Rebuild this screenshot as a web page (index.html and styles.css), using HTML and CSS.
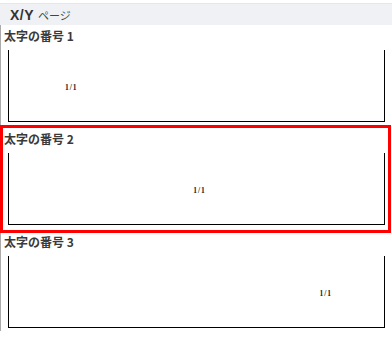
FILE: index.html
```html
<!DOCTYPE html>
<html lang="ja">
<head>
<meta charset="utf-8">
<link rel="stylesheet" href="styles.css">
</head>
<body>
<div class="header"><span class="xy">X/Y</span> <span class="page">ページ</span></div>
<div class="list">
  <div class="section">
    <div class="label">太字の番号 1</div>
    <div class="box left"><span class="num">1/1</span></div>
  </div>
  <div class="section selected">
    <div class="label">太字の番号 2</div>
    <div class="box center"><span class="num">1/1</span></div>
  </div>
  <div class="section">
    <div class="label">太字の番号 3</div>
    <div class="box right"><span class="num">1/1</span></div>
  </div>
</div>
</body>
</html>
```
FILE: styles.css
```css
html, body {
  margin: 0;
  padding: 0;
  background: #fff;
}
body {
  width: 392px;
  height: 337px;
  overflow: hidden;
  font-family: "Noto Sans CJK JP", "Noto Sans", sans-serif;
  color: #333;
}
.header {
  margin-top: 3px;
  height: 21px;
  border-top: 1px solid #e4e9e4;
  background: #f0f1f4;
  padding-left: 10px;
  display: flex;
  align-items: center;
  gap: 4px;
}
.xy {
  font-family: "Liberation Sans", "Noto Sans", sans-serif;
  font-weight: bold;
  font-size: 14px;
  letter-spacing: 0.5px;
  color: #333;
}
.page {
  font-size: 11px;
  color: #444;
}
.list {
  border-left: 1px solid #aaa;
  height: 306px;
}
.section {
  position: relative;
  padding: 3px 7px 7px 0;
}
.section + .section {
  padding-top: 2px;
}
.section.selected::after {
  content: "";
  position: absolute;
  top: -4px;
  bottom: -1px;
  left: -1px;
  right: 1px;
  border: 3px solid #ff0000;
}
.label {
  padding-left: 3px;
  height: 16px;
  line-height: 16px;
  font-size: 12px;
  font-weight: bold;
  color: #3a3a3a;
}
.box {
  margin-top: 6px;
  margin-left: 7px;
  height: 68px;
  padding-top: 3px;
  border-left: 1px solid #000;
  border-right: 1px solid #000;
  border-bottom: 1px solid #000;
  display: flex;
  align-items: center;
}
.box.left {
  justify-content: flex-start;
  padding-left: 56px;
}
.box.center {
  justify-content: center;
  padding-left: 6px;
}
.box.right {
  justify-content: flex-end;
  padding-right: 52px;
}
.num {
  font-family: "Liberation Serif", serif;
  font-weight: bold;
  font-size: 7.5px;
  color: #222;
  letter-spacing: 1px;
}
```
